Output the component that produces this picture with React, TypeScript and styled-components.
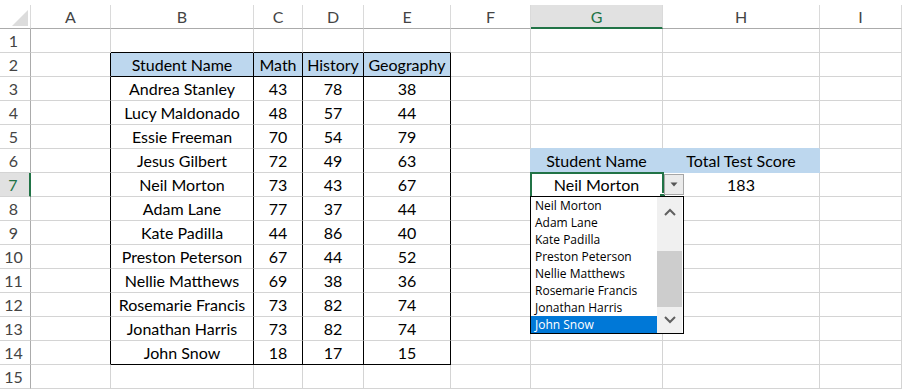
import React from 'react';
import styled, { createGlobalStyle } from 'styled-components';

const GRID = '#d4d4d4';
const HDR_LINE = '#ababab';
const HDR_SEP = '#dadada';
const BLUE = '#bdd7ee';
const GREEN = '#217346';
const BLACK = '#000';

const Global = createGlobalStyle`
  html, body { margin: 0; padding: 0; background: #fff; }
  body { font-family: Lato, "Liberation Sans", sans-serif; }
`;

const Sheet = styled.div`
  padding-top: 5px;
  width: 902px;
  height: 387px;
  overflow: hidden;
`;

const Grid = styled.div`
  display: grid;
  grid-template-columns: 31px 80px 143px 49px 61px 87px 80px 132px 157px 82px;
  grid-auto-rows: 24px;
  font-family: Lato, "Liberation Sans", sans-serif;
  font-size: 16px;
  color: #000;
`;

const Corner = styled.div`
  box-sizing: border-box;
  border-right: 1px solid ${HDR_SEP};
  border-bottom: 1px solid ${HDR_LINE};
  display: flex;
  align-items: flex-end;
  justify-content: flex-end;
  padding: 0 2px 2px 0;
`;

const ColHeader = styled.div<{ $active?: boolean }>`
  box-sizing: border-box;
  text-align: center;
  line-height: 23px;
  background: ${(p) => (p.$active ? '#e1e1e1' : '#fff')};
  color: ${(p) => (p.$active ? GREEN : '#444')};
  border-right: 1px solid ${HDR_SEP};
  border-bottom: ${(p) => (p.$active ? `2px solid ${GREEN}` : `1px solid ${HDR_LINE}`)};
`;

const RowHeader = styled.div<{ $active?: boolean }>`
  box-sizing: border-box;
  text-align: center;
  padding-right: 3px;
  line-height: 23px;
  background: ${(p) => (p.$active ? '#e1e1e1' : '#fff')};
  color: ${(p) => (p.$active ? GREEN : '#444')};
  border-right: ${(p) => (p.$active ? `2px solid ${GREEN}` : `1px solid ${HDR_LINE}`)};
  border-bottom: 1px solid ${GRID};
`;

const Cell = styled.div<{ $fill?: string; $rb?: string; $bb?: string }>`
  box-sizing: border-box;
  position: relative;
  text-align: center;
  line-height: 23px;
  white-space: nowrap;
  background: ${(p) => p.$fill ?? '#fff'};
  border-right: 1px solid ${(p) => p.$rb ?? GRID};
  border-bottom: 1px solid ${(p) => p.$bb ?? GRID};
`;

const Selection = styled.div`
  position: absolute;
  left: -1px;
  top: -1px;
  width: 134px;
  height: 26px;
  box-sizing: border-box;
  border: 2px solid ${GREEN};
  z-index: 3;
  pointer-events: none;
`;

const FillHandle = styled.div`
  position: absolute;
  right: -4px;
  bottom: -4px;
  width: 5px;
  height: 5px;
  background: ${GREEN};
  border: 1px solid #fff;
`;

const DropButton = styled.div`
  position: absolute;
  left: 133px;
  top: 1px;
  width: 20px;
  height: 21px;
  box-sizing: border-box;
  border: 1px solid #a6a6a6;
  background: #ebebeb;
  display: flex;
  align-items: center;
  justify-content: center;
  z-index: 4;
`;

const DropList = styled.div`
  position: absolute;
  left: -1px;
  top: 23px;
  width: 154px;
  height: 138px;
  box-sizing: border-box;
  border: 1px solid ${BLACK};
  background: #fff;
  z-index: 10;
  display: flex;
  padding-right: 1px;
  font-family: "Open Sans", "Noto Sans", sans-serif;
  font-size: 12px;
  text-align: left;
`;

const Items = styled.div`
  flex: 1;
  display: flex;
  flex-direction: column;
`;

const Item = styled.div<{ $selected?: boolean }>`
  height: 17px;
  line-height: 18px;
  padding-left: 4px;
  background: ${(p) => (p.$selected ? '#0078d7' : 'transparent')};
  color: ${(p) => (p.$selected ? '#fff' : '#000')};
`;

const ScrollBar = styled.div`
  width: 25px;
  background: #f0f0f0;
  display: flex;
  flex-direction: column;
`;

const ArrowBox = styled.div<{ $h: number }>`
  height: ${(p) => p.$h}px;
  display: flex;
  align-items: center;
  justify-content: center;
`;

const Track = styled.div<{ $h: number }>`
  height: ${(p) => p.$h}px;
`;

const Thumb = styled.div`
  height: 56px;
  background: #cdcdcd;
`;

const Chevron = ({ up }: { up?: boolean }) => (
  <svg width="12" height="8" viewBox="0 0 12 8">
    <polyline
      points={up ? '1,7 6,2 11,7' : '1,1 6,6 11,1'}
      fill="none"
      stroke="#606060"
      strokeWidth="2"
    />
  </svg>
);

const cols = ['A', 'B', 'C', 'D', 'E', 'F', 'G', 'H', 'I'];

const students: [string, number, number, number][] = [
  ['Andrea Stanley', 43, 78, 38],
  ['Lucy Maldonado', 48, 57, 44],
  ['Essie Freeman', 70, 54, 79],
  ['Jesus Gilbert', 72, 49, 63],
  ['Neil Morton', 73, 43, 67],
  ['Adam Lane', 77, 37, 44],
  ['Kate Padilla', 44, 86, 40],
  ['Preston Peterson', 67, 44, 52],
  ['Nellie Matthews', 69, 38, 36],
  ['Rosemarie Francis', 73, 82, 74],
  ['Jonathan Harris', 73, 82, 74],
  ['John Snow', 18, 17, 15],
];

const listItems = [
  'Neil Morton',
  'Adam Lane',
  'Kate Padilla',
  'Preston Peterson',
  'Nellie Matthews',
  'Rosemarie Francis',
  'Jonathan Harris',
  'John Snow',
];

type CellSpec = { text?: React.ReactNode; fill?: string; rb?: string; bb?: string; extra?: React.ReactNode };

function buildRow(r: number): CellSpec[] {
  const row: CellSpec[] = cols.map(() => ({}));
  const inTable = r >= 2 && r <= 14;
  if (r === 1) {
    for (let c = 1; c <= 4; c++) row[c].bb = BLACK;
  }
  if (inTable) {
    row[0].rb = BLACK;
    for (let c = 1; c <= 4; c++) row[c].rb = BLACK;
    if (r === 2) {
      const hdr = ['Student Name', 'Math', 'History', 'Geography'];
      for (let c = 1; c <= 4; c++) {
        row[c].text = hdr[c - 1];
        row[c].fill = BLUE;
        row[c].bb = BLACK;
      }
    } else {
      const s = students[r - 3];
      for (let c = 1; c <= 4; c++) row[c].text = s[c - 1];
      if (r === 14) for (let c = 1; c <= 4; c++) row[c].bb = BLACK;
    }
  }
  if (r === 5) {
    row[6].bb = BLUE;
    row[7].bb = BLUE;
  }
  if (r === 6) {
    row[5].rb = BLUE;
    row[6] = { text: 'Student Name', fill: BLUE, rb: BLUE, bb: BLUE };
    row[7] = { text: 'Total Test Score', fill: BLUE, rb: BLUE, bb: BLUE };
  }
  if (r === 7) {
    row[6] = {
      text: 'Neil Morton',
      extra: (
        <>
          <Selection>
            <FillHandle />
          </Selection>
          <DropButton>
            <svg width="8" height="5" viewBox="0 0 8 5">
              <polygon points="0.5,0.5 7.5,0.5 4,4.5" fill="#555" />
            </svg>
          </DropButton>
          <DropList>
            <Items>
              {listItems.map((n, i) => (
                <Item key={n} $selected={i === listItems.length - 1}>
                  {n}
                </Item>
              ))}
            </Items>
            <ScrollBar>
              <ArrowBox $h={30}>
                <Chevron up />
              </ArrowBox>
              <Track $h={24} />
              <Thumb />
              <ArrowBox $h={26}>
                <Chevron />
              </ArrowBox>
            </ScrollBar>
          </DropList>
        </>
      ),
    };
    row[7].text = 183;
  }
  return row;
}

export default function App() {
  const rows = Array.from({ length: 15 }, (_, i) => i + 1);
  return (
    <>
      <Global />
      <Sheet>
        <Grid>
          <Corner>
            <svg width="16" height="16" viewBox="0 0 16 16">
              <polygon points="16,0 16,16 0,16" fill="#dcdcdc" />
            </svg>
          </Corner>
          {cols.map((c) => (
            <ColHeader key={c} $active={c === 'G'}>
              {c}
            </ColHeader>
          ))}
          {rows.map((r) => (
            <React.Fragment key={r}>
              <RowHeader $active={r === 7}>{r}</RowHeader>
              {buildRow(r).map((cell, ci) => (
                <Cell key={ci} $fill={cell.fill} $rb={cell.rb} $bb={cell.bb}>
                  {cell.text}
                  {cell.extra}
                </Cell>
              ))}
            </React.Fragment>
          ))}
        </Grid>
      </Sheet>
    </>
  );
}
